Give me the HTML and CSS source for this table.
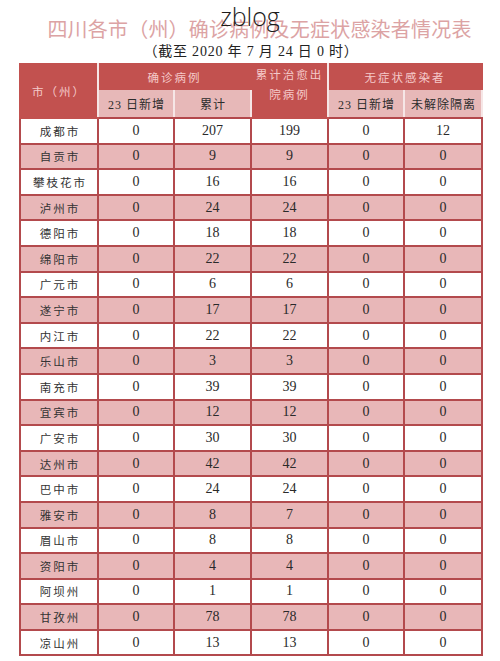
FILE: index.html
```html
<!DOCTYPE html>
<html lang="zh-CN">
<head>
<meta charset="utf-8">
<title>四川各市（州）确诊病例及无症状感染者情况表</title>
<link rel="stylesheet" href="styles.css">
</head>
<body>
<div class="page">
  <div class="heading">
    <h1 class="title">四川各市（州）确诊病例及无症状感染者情况表</h1>
    <div class="watermark">zblog</div>
    <p class="subtitle">（截至 2020 年 7 月 24 日 0 时）</p>
  </div>
  <table class="stats">
    <colgroup>
      <col class="c1"><col class="c2"><col class="c3"><col class="c4"><col class="c5"><col class="c6">
    </colgroup>
    <thead>
      <tr class="h1">
        <th rowspan="2" class="red city">市（州）</th>
        <th colspan="2" class="red">确诊病例</th>
        <th rowspan="2" class="red cured">累计治愈出院病例</th>
        <th colspan="2" class="red">无症状感染者</th>
      </tr>
      <tr class="h2">
        <th class="sub">23 日新增</th>
        <th class="sub">累计</th>
        <th class="sub">23 日新增</th>
        <th class="sub">未解除隔离</th>
      </tr>
    </thead>
    <tbody>
      <tr><td class="name">成都市</td><td>0</td><td>207</td><td>199</td><td>0</td><td>12</td></tr>
      <tr><td class="name">自贡市</td><td>0</td><td>9</td><td>9</td><td>0</td><td>0</td></tr>
      <tr><td class="name">攀枝花市</td><td>0</td><td>16</td><td>16</td><td>0</td><td>0</td></tr>
      <tr><td class="name">泸州市</td><td>0</td><td>24</td><td>24</td><td>0</td><td>0</td></tr>
      <tr><td class="name">德阳市</td><td>0</td><td>18</td><td>18</td><td>0</td><td>0</td></tr>
      <tr><td class="name">绵阳市</td><td>0</td><td>22</td><td>22</td><td>0</td><td>0</td></tr>
      <tr><td class="name">广元市</td><td>0</td><td>6</td><td>6</td><td>0</td><td>0</td></tr>
      <tr><td class="name">遂宁市</td><td>0</td><td>17</td><td>17</td><td>0</td><td>0</td></tr>
      <tr><td class="name">内江市</td><td>0</td><td>22</td><td>22</td><td>0</td><td>0</td></tr>
      <tr><td class="name">乐山市</td><td>0</td><td>3</td><td>3</td><td>0</td><td>0</td></tr>
      <tr><td class="name">南充市</td><td>0</td><td>39</td><td>39</td><td>0</td><td>0</td></tr>
      <tr><td class="name">宜宾市</td><td>0</td><td>12</td><td>12</td><td>0</td><td>0</td></tr>
      <tr><td class="name">广安市</td><td>0</td><td>30</td><td>30</td><td>0</td><td>0</td></tr>
      <tr><td class="name">达州市</td><td>0</td><td>42</td><td>42</td><td>0</td><td>0</td></tr>
      <tr><td class="name">巴中市</td><td>0</td><td>24</td><td>24</td><td>0</td><td>0</td></tr>
      <tr><td class="name">雅安市</td><td>0</td><td>8</td><td>7</td><td>0</td><td>0</td></tr>
      <tr><td class="name">眉山市</td><td>0</td><td>8</td><td>8</td><td>0</td><td>0</td></tr>
      <tr><td class="name">资阳市</td><td>0</td><td>4</td><td>4</td><td>0</td><td>0</td></tr>
      <tr><td class="name">阿坝州</td><td>0</td><td>1</td><td>1</td><td>0</td><td>0</td></tr>
      <tr><td class="name">甘孜州</td><td>0</td><td>78</td><td>78</td><td>0</td><td>0</td></tr>
      <tr><td class="name">凉山州</td><td>0</td><td>13</td><td>13</td><td>0</td><td>0</td></tr>
    </tbody>
  </table>
</div>
</body>
</html>
```
FILE: styles.css
```css
* { box-sizing: border-box; }
html, body { margin: 0; padding: 0; background: #ffffff; }
.page {
  width: 500px;
  height: 661px;
  overflow: hidden;
  font-family: "Liberation Serif", "Noto Sans CJK SC", serif;
  color: #2a2a2a;
}
.heading {
  position: relative;
  padding-top: 17px;
  text-align: center;
}
.title {
  margin: 0;
  padding-left: 19px;
  font-family: "Noto Sans CJK SC", sans-serif;
  font-weight: 400;
  font-size: 20px;
  line-height: 24px;
  letter-spacing: 0.2px;
  color: #dca3a4;
}
.watermark {
  position: absolute;
  top: 0;
  left: 0;
  right: 0;
  text-align: center;
  font-family: "Open Sans", "Noto Sans", sans-serif;
  font-weight: 300;
  font-size: 25px;
  line-height: 34px;
  margin-top: -1px;
  color: #1c1c1c;
}
.subtitle {
  margin: 0;
  padding-left: 2px;
  font-size: 14px;
  line-height: 22px;
  letter-spacing: 0.8px;
  color: #222;
}
.stats {
  margin: 0 0 0 19px;
  width: 462px;
  border-collapse: collapse;
  table-layout: fixed;
}
.c1 { width: 78px; }
.c2 { width: 76px; }
.c3 { width: 77px; }
.c4 { width: 77px; }
.c5 { width: 76px; }
.c6 { width: 78px; }
.stats th, .stats td {
  padding: 0;
  text-align: center;
  font-weight: 400;
  font-size: 13px;
}
.stats th {
  font-size: 11.5px;
  letter-spacing: 2px;
}
.h1 { height: 25px; }
.h2 { height: 29px; }
.red {
  background: #c2514f;
  color: #f5caca;
  border: 2px solid #c2514f;
}
.h2 .sub {
  background: #e7b8b8;
  color: #2c2c2c;
  font-size: 12px;
  border: 2px solid #f6e6e6;
  border-bottom: 2px solid #b3474b;
  letter-spacing: 1px;
  padding-left: 1px;
}
.city { vertical-align: middle; padding-bottom: 4px; padding-left: 2px; }
.cured {
  vertical-align: top;
  padding: 4px 2px 0 4px;
  line-height: 20px;
  border-left-color: #f6e6e6;
  border-right-color: #f6e6e6;
}
.h1 th:first-child { border-right: 2px solid #f6e6e6; }
.stats td {
  height: 25.6px;
  border: 2px solid #b34a4d;
  font-size: 14px;
  color: #2a2a2a;
}
.stats td.name {
  font-size: 11.5px;
  letter-spacing: 2px;
  padding-left: 2px;
  color: #333;
}
.stats tbody tr:nth-child(even) td { background: #e8b7b8; }
.stats tbody tr:nth-child(odd) td { background: #ffffff; }
```
